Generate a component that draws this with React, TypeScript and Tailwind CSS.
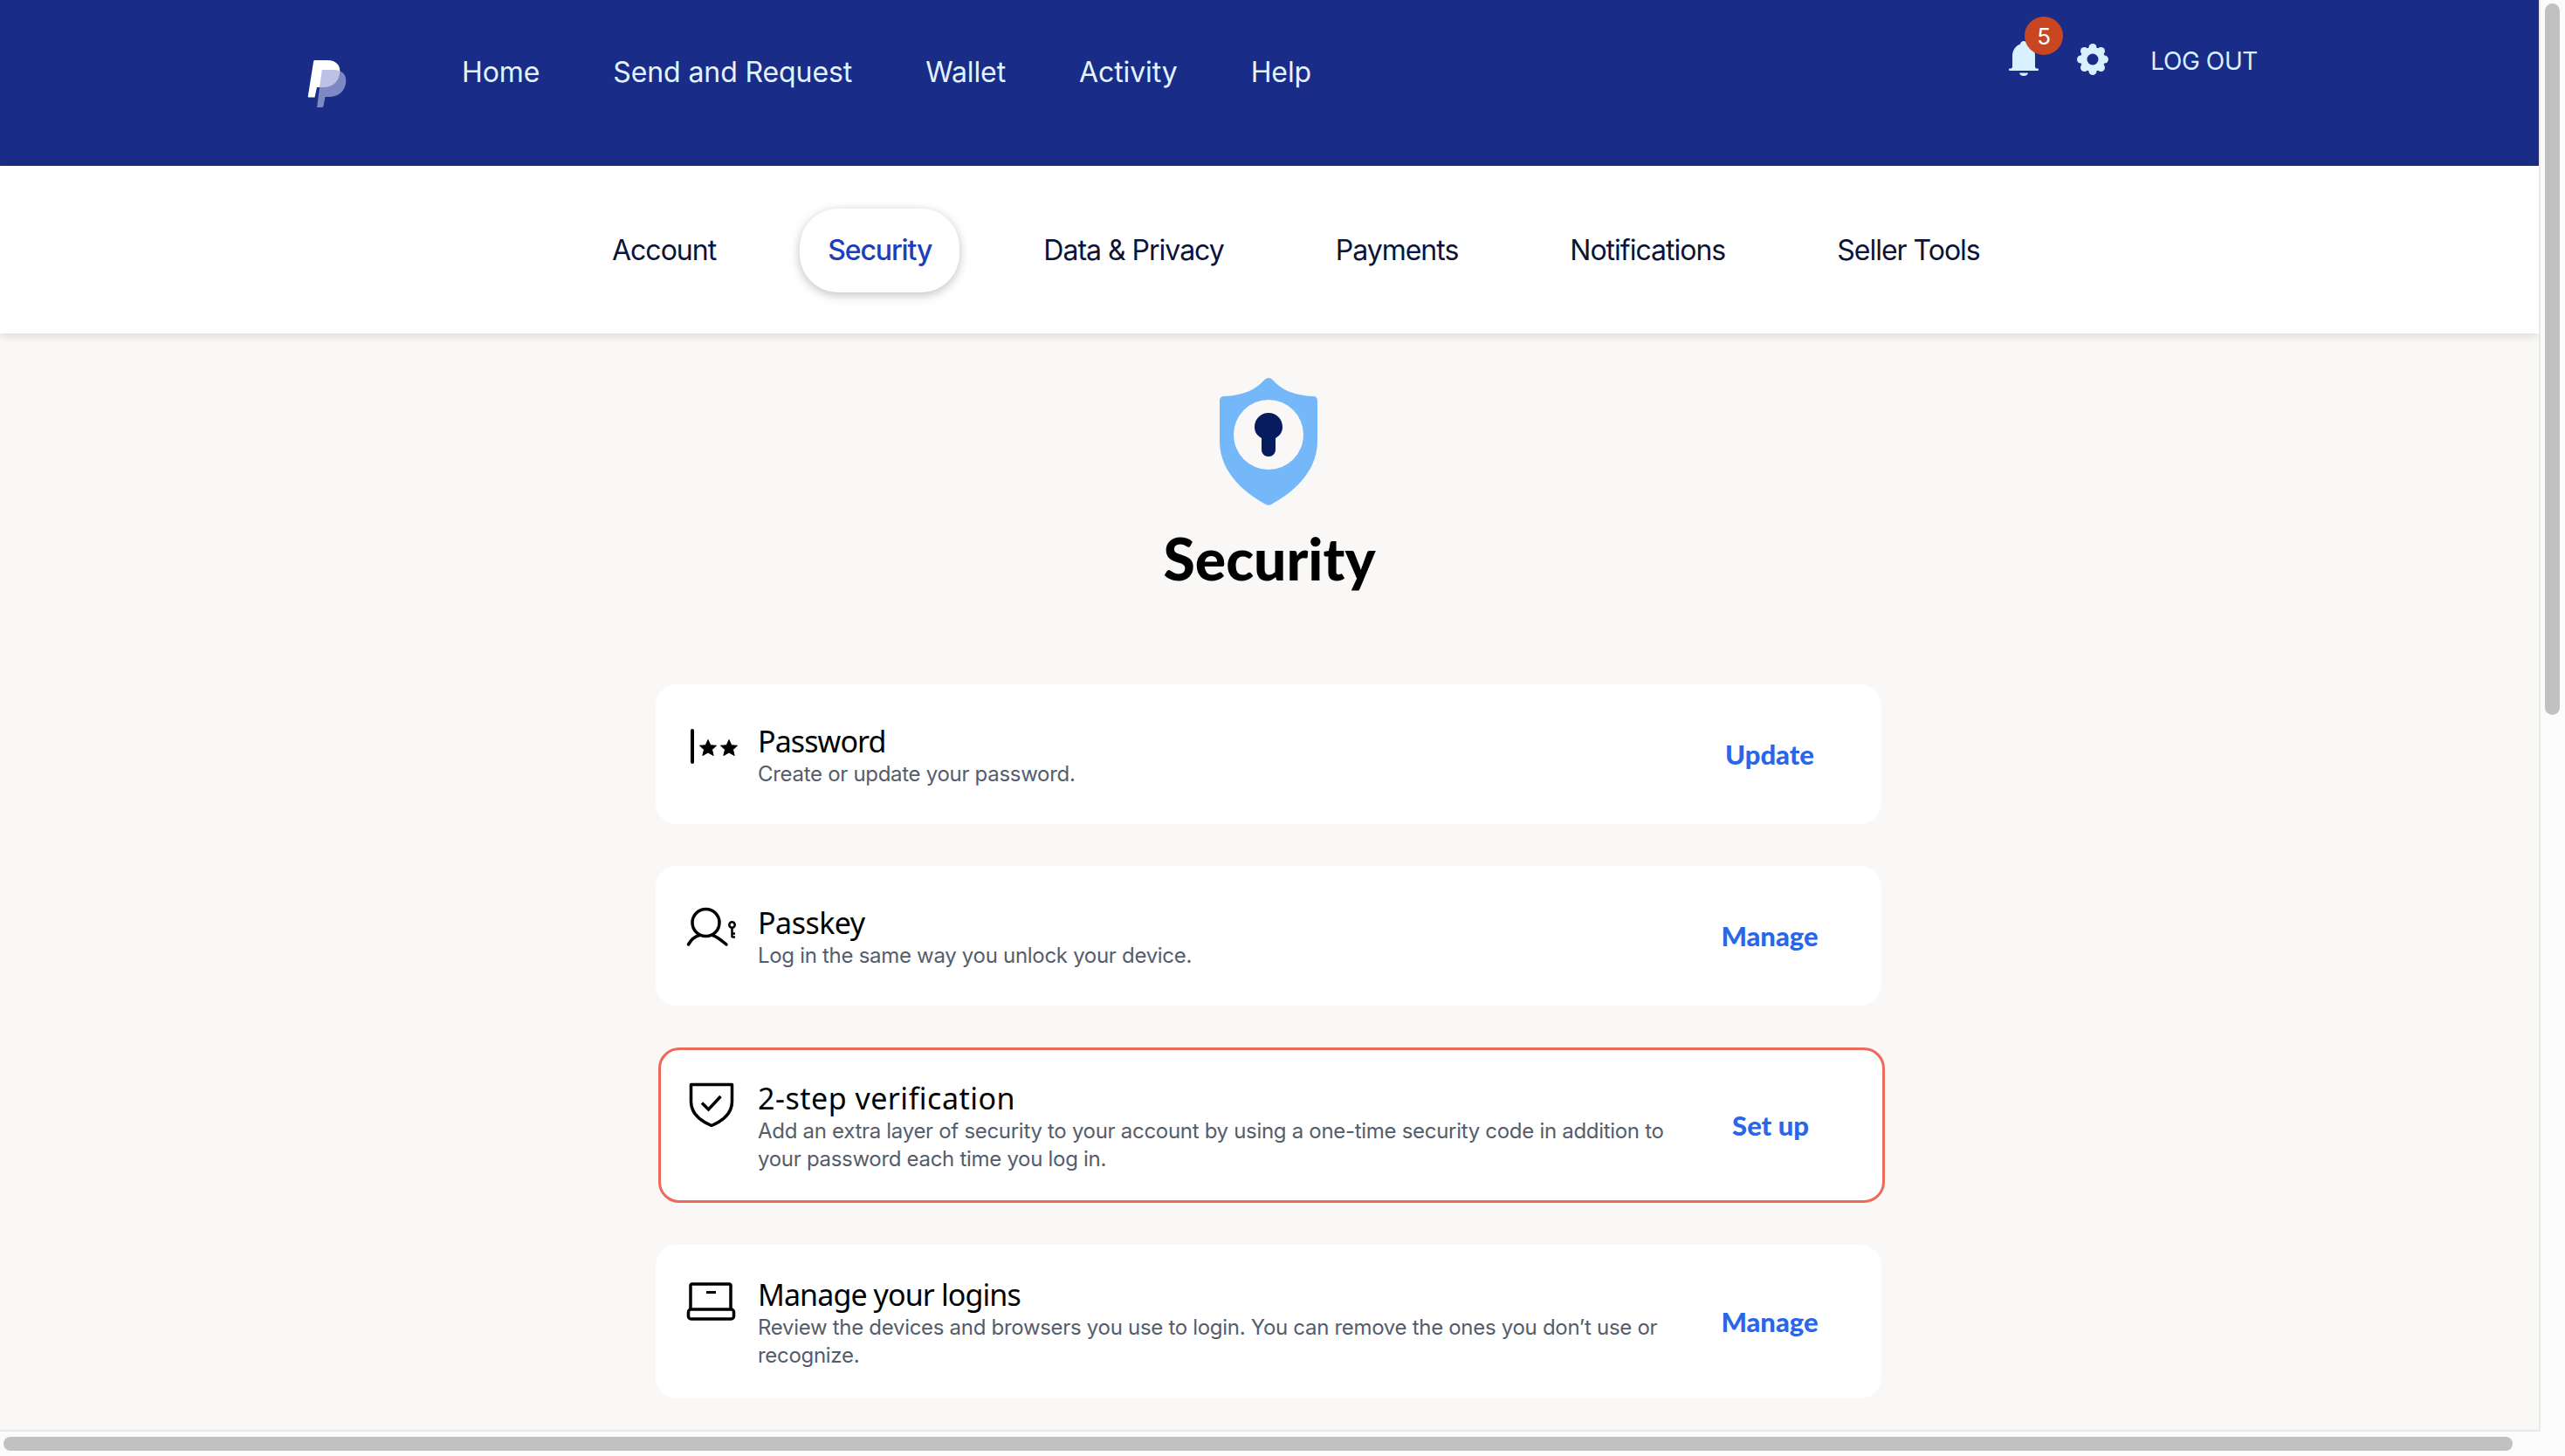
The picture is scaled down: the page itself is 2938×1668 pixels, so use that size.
import React from 'react';

const navLinks = ['Home', 'Send and Request', 'Wallet', 'Activity', 'Help'];
const tabs = ['Account', 'Security', 'Data & Privacy', 'Payments', 'Notifications', 'Seller Tools'];

const PayPalLogo = () => (
  <svg width="70" height="70" viewBox="0 0 70 70" className="shrink-0">
    <path d="M20 9H35C45 9 51 15 49 25C47 35 40 40 30 40H23L20.500 51.500H13.500Q12.500 51.500 12.800 50L19 11Q19.300 9 20 9Z" fill="#fff" />
    <path d="M29 20H42C52 20 58 26 56 36C54 46 46 51 37 51H32.500L30.500 61.500Q30.300 63 28.500 63H23L28.500 22Q28.800 20 29 20Z" fill="#a4aadb" fillOpacity="0.73" />
  </svg>
);

const BellIcon = () => (
  <svg width="36" height="42" viewBox="0 0 36 42" className="shrink-0">
    <path d="M18 1C20 1 21.500 2.500 22 4.500C28 7 31 12 31 18V31L34 35H2L5 31V18C5 12 8 7 14 4.500C14.500 2.500 16 1 18 1Z" fill="#d9f0ff" />
    <rect x="1" y="32.500" width="34" height="2.500" rx="1" fill="#d9f0ff" />
    <path d="M13 37.500H23C22.500 40 20.500 41 18 41C15.500 41 13.500 40 13 37.500Z" fill="#d9f0ff" />
  </svg>
);

const GearIcon = () => (
  <svg width="36" height="36" viewBox="0 0 36 36" className="shrink-0">
    <circle cx="18" cy="18" r="14" fill="#d9f0ff" />
    <circle cx="18" cy="4.500" r="4.500" fill="#d9f0ff" />
    <circle cx="18" cy="31.500" r="4.500" fill="#d9f0ff" />
    <circle cx="4.500" cy="18" r="4.500" fill="#d9f0ff" />
    <circle cx="31.500" cy="18" r="4.500" fill="#d9f0ff" />
    <circle cx="8.500" cy="8.500" r="4.500" fill="#d9f0ff" />
    <circle cx="27.500" cy="8.500" r="4.500" fill="#d9f0ff" />
    <circle cx="8.500" cy="27.500" r="4.500" fill="#d9f0ff" />
    <circle cx="27.500" cy="27.500" r="4.500" fill="#d9f0ff" />
    <circle cx="18" cy="18" r="6.500" fill="#192c88" />
  </svg>
);

const ShieldLock = () => (
  <svg width="112" height="146" viewBox="0 0 112 146" className="shrink-0 mr-[2px]">
    <path d="M56 0C58 0 59.500 1 61 2.500C71 14 86 20 107 21C110 21 112 23 112 26V72C112 108 84 131 59 145C57 146 55 146 53 145C28 131 0 108 0 72V26C0 23 2 21 5 21C26 20 41 14 51 2.500C52.500 1 54 0 56 0Z" fill="#74b8f9" />
    <circle cx="56" cy="65" r="40" fill="#faf8f6" />
    <path d="M56 40C65 40 72 47 72 56C72 62 69 66 64 69V82C64 86.500 60.500 90 56 90C51.500 90 48 86.500 48 82V69C43 66 40 62 40 56C40 47 47 40 56 40Z" fill="#071c5f" />
  </svg>
);

const starPoints = (cx: number, cy: number) =>
  [
    [0, -9.5], [2.8, -3.2], [9.5, -2.8], [4.5, 1.8], [6.2, 8.5],
    [0, 5], [-6.2, 8.5], [-4.5, 1.8], [-9.5, -2.8], [-2.8, -3.2],
  ]
    .map(([x, y]) => `${cx + x},${cy + y}`)
    .join(' ');

const PasswordIcon = () => (
  <svg width="60" height="60" viewBox="0 1 60 60" className="shrink-0 overflow-visible">
    <path d="M13 9V45" stroke="#000" strokeWidth="4" strokeLinecap="round" />
    <polygon points={starPoints(31, 29)} fill="#000" stroke="#000" strokeWidth="1" strokeLinejoin="round" />
    <polygon points={starPoints(55, 29)} fill="#000" stroke="#000" strokeWidth="1" strokeLinejoin="round" />
  </svg>
);

const PasskeyIcon = () => (
  <svg width="60" height="60" viewBox="0 3 60 60" className="shrink-0 overflow-visible">
    <circle cx="28.500" cy="23" r="15.500" fill="none" stroke="#000" strokeWidth="3.500" />
    <path d="M8.500 48C12 42 17 38.500 21 37.500M36 37.500C40 38.500 45 42 52 48" fill="none" stroke="#000" strokeWidth="3.500" strokeLinecap="round" />
    <circle cx="58.500" cy="25.500" r="3.200" fill="none" stroke="#000" strokeWidth="2.500" />
    <path d="M58.500 29V40M58.500 35.500H62M58.500 39.500H62" fill="none" stroke="#000" strokeWidth="2.500" />
  </svg>
);

const ShieldCheckIcon = () => (
  <svg width="60" height="60" viewBox="0 0 60 60" className="shrink-0 overflow-visible">
    <path d="M11.500 4.500H58.500V24C58.500 37 48 46 35 51.500C22 46 11.500 37 11.500 24Z" fill="none" stroke="#000" strokeWidth="3.500" strokeLinejoin="round" />
    <path d="M24 25.500L31.500 33L45.500 18" fill="none" stroke="#000" strokeWidth="3.500" />
  </svg>
);

const LaptopIcon = () => (
  <svg width="60" height="60" viewBox="0 -4 60 60" className="shrink-0 overflow-visible">
    <path d="M11 33V6Q11 4 13 4H55Q57 4 57 6V33" fill="none" stroke="#000" strokeWidth="3.500" />
    <rect x="8.500" y="33" width="52" height="11" rx="3" fill="none" stroke="#000" strokeWidth="3.500" />
    <rect x="29" y="12" width="11" height="3" fill="#000" />
  </svg>
);

interface SecurityCardProps {
  icon: React.ReactNode;
  title: string;
  titleClass?: string;
  description: string;
  action: string;
  height: string;
  highlighted?: boolean;
}

const SecurityCard: React.FC<SecurityCardProps> = ({ icon, title, titleClass = 'tracking-[-0.9px]', description, action, height, highlighted }) => {
  return (
    <div
      className={
        highlighted
          ? `flex items-center bg-white rounded-3xl border-[3px] border-[#ec6a5a] w-[1405px] ml-[3px] pl-[23px] ${height}`
          : `flex items-center bg-white rounded-3xl w-[1404px] pl-[29px] ${height}`
      }
    >
      <div className="flex flex-1 gap-7 items-start pt-1">
        <div className="w-[60px] shrink-0">{icon}</div>
        <div className="w-[1059px]">
          <div className={`font-['Noto_Sans',sans-serif] text-[34px] leading-[40px] text-black ${titleClass}`}>{title}</div>
          <div className="mt-[2px] font-['Inter',sans-serif] text-[24px] leading-[32px] text-[#545d6b] tracking-[-0.3px]">{description}</div>
        </div>
      </div>
      <div className="w-[200px] mr-[28px] text-center font-['Lato',sans-serif] font-black text-[31px] text-[#2a66ea]">{action}</div>
    </div>
  );
};

export default function App() {
  return (
    <div className="w-[2938px] h-[1668px] flex flex-col overflow-hidden bg-[#fbfbfb] font-['Inter',sans-serif]">
      <div className="flex flex-1 min-h-0">
        <div className="w-[2910px] flex flex-col bg-[#f9f8f6] border-r-2 border-b-2 border-[#e8e8e6] overflow-hidden">
          <header className="h-[190px] shrink-0 bg-[#192c88] flex items-start pl-[340px] pr-[322px]">
            <div className="mt-[60px]"><PayPalLogo /></div>
            <nav className="flex gap-[84px] ml-[119px] mt-[63px] text-[32px] leading-[40px] text-[#e3f3ff] tracking-[-0.1px]">
              {navLinks.map((link) => (
                <span key={link}>{link}</span>
              ))}
            </nav>
            <div className="ml-auto flex items-start">
              <div className="relative mt-[46px]">
                <BellIcon />
                <span className="absolute left-[19px] top-[-27px] w-[44px] h-[44px] rounded-full bg-[#c84621] text-white text-[26px] flex items-center justify-center">5</span>
              </div>
              <div className="ml-[43px] mt-[50px]"><GearIcon /></div>
              <span className="ml-[48px] mt-[50px] text-[28px] leading-[40px] text-[#d9f0ff] tracking-[-0.4px]">LOG OUT</span>
            </div>
          </header>

          <div className="relative z-10 h-[192px] shrink-0 bg-white shadow-[0_3px_10px_rgba(0,0,0,0.12)] flex items-center pl-[669px] gap-16 pt-[2px] text-[32px] tracking-[-1px]">
            {tabs.map((tab) =>
              tab === 'Security' ? (
                <span key={tab} className="h-[96px] px-8 flex items-center rounded-[44px] bg-white shadow-[0_3px_12px_rgba(0,0,0,0.25)] font-medium tracking-[-1.1px] text-[#1d40b8]">
                  {tab}
                </span>
              ) : (
                <span key={tab} className="px-8 text-[#0b1437]">{tab}</span>
              )
            )}
          </div>

          <div className="flex flex-col items-center pt-[51px] shrink-0">
            <ShieldLock />
            <h1 className="mt-[21px] font-['Lato',sans-serif] font-black text-[66px] leading-[80px] text-black">Security</h1>
          </div>

          <div className="flex flex-col ml-[751px] mt-[104px] gap-12 items-start">
            <SecurityCard icon={<PasswordIcon />} title="Password" description="Create or update your password." action="Update" height="h-[160px]" />
            <SecurityCard icon={<PasskeyIcon />} title="Passkey" titleClass="tracking-[-0.5px]" description="Log in the same way you unlock your device." action="Manage" height="h-[160px]" />
            <SecurityCard
              highlighted
              icon={<ShieldCheckIcon />}
              title="2-step verification"
              titleClass="tracking-[0.5px]"
              description="Add an extra layer of security to your account by using a one-time security code in addition to your password each time you log in."
              action="Set up"
              height="h-[178px]"
            />
            <SecurityCard
              icon={<LaptopIcon />}
              title="Manage your logins"
              description="Review the devices and browsers you use to login. You can remove the ones you don’t use or recognize."
              action="Manage"
              height="h-[176px]"
            />
          </div>
        </div>
        <div className="flex-1 pl-[5px] pt-1">
          <div className="w-[17px] h-[815px] rounded-full bg-[#c1c1c1]" />
        </div>
      </div>
      <div className="h-[28px] shrink-0 pt-[6px] pl-1">
        <div className="w-[2874px] h-4 rounded-full bg-[#c1c1c1]" />
      </div>
    </div>
  );
}
